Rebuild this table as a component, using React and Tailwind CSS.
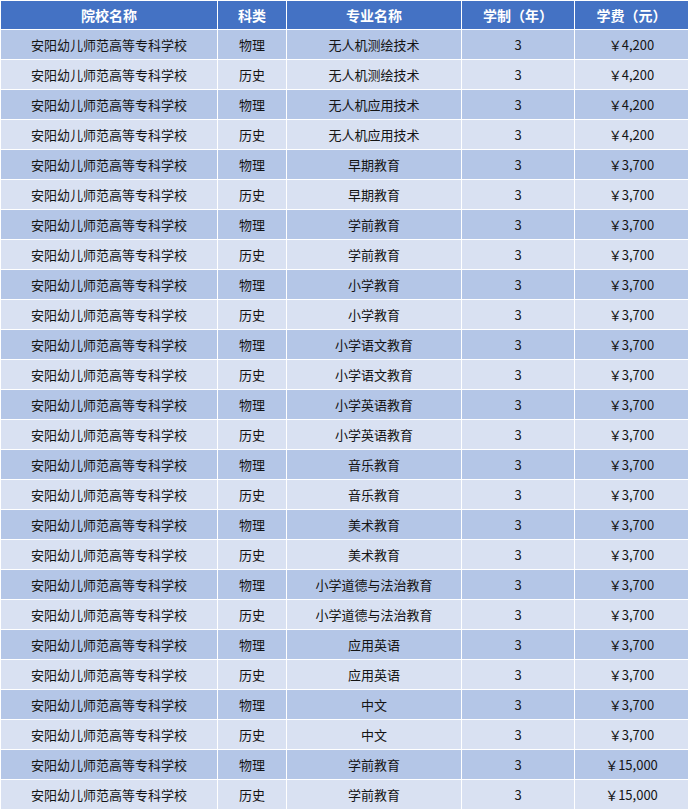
import React from 'react';

const school = '安阳幼儿师范高等专科学校';

const majors = [
  ['无人机测绘技术', '￥4,200'],
  ['无人机应用技术', '￥4,200'],
  ['早期教育', '￥3,700'],
  ['学前教育', '￥3,700'],
  ['小学教育', '￥3,700'],
  ['小学语文教育', '￥3,700'],
  ['小学英语教育', '￥3,700'],
  ['音乐教育', '￥3,700'],
  ['美术教育', '￥3,700'],
  ['小学道德与法治教育', '￥3,700'],
  ['应用英语', '￥3,700'],
  ['中文', '￥3,700'],
  ['学前教育', '￥15,000'],
];

// each major appears twice: 物理 then 历史
const rows = majors.flatMap(([name, fee]) => [
  { type: '物理', name, fee },
  { type: '历史', name, fee },
]);

const App = () => {
  return (
    <div
      className="w-[688px] bg-white"
      style={{ fontFamily: '"Microsoft YaHei", "Noto Sans CJK SC", "Noto Sans", sans-serif' }}
    >
      <table className="w-[688px] table-fixed border-collapse">
        <colgroup>
          <col className="w-[217px]" />
          <col className="w-[69px]" />
          <col className="w-[175px]" />
          <col className="w-[113px]" />
          <col className="w-[114px]" />
        </colgroup>
        <thead>
          <tr className="bg-[#4472c4] text-white">
            {['院校名称', '科类', '专业名称', '学制（年）', '学费（元）'].map((h) => (
              <th
                key={h}
                className="h-[29px] border border-white p-0 text-center text-[14px] font-bold leading-none"
              >
                {h}
              </th>
            ))}
          </tr>
        </thead>
        <tbody>
          {rows.map((r, i) => (
            <tr key={i} className={i % 2 === 0 ? 'bg-[#b4c6e7]' : 'bg-[#d9e1f2]'}>
              <td className="h-[30px] border border-white p-0 text-center text-[13px] leading-none text-[#141414]">
                {school}
              </td>
              <td className="border border-white p-0 text-center text-[13px] leading-none text-[#141414]">
                {r.type}
              </td>
              <td className="border border-white p-0 text-center text-[13px] leading-none text-[#141414]">
                {r.name}
              </td>
              <td className="border border-white p-0 text-center text-[13px] leading-none text-[#141414]">
                3
              </td>
              <td className="border border-white p-0 text-center text-[13px] leading-none text-[#141414]">
                {r.fee}
              </td>
            </tr>
          ))}
        </tbody>
      </table>
    </div>
  );
};

export default App;
